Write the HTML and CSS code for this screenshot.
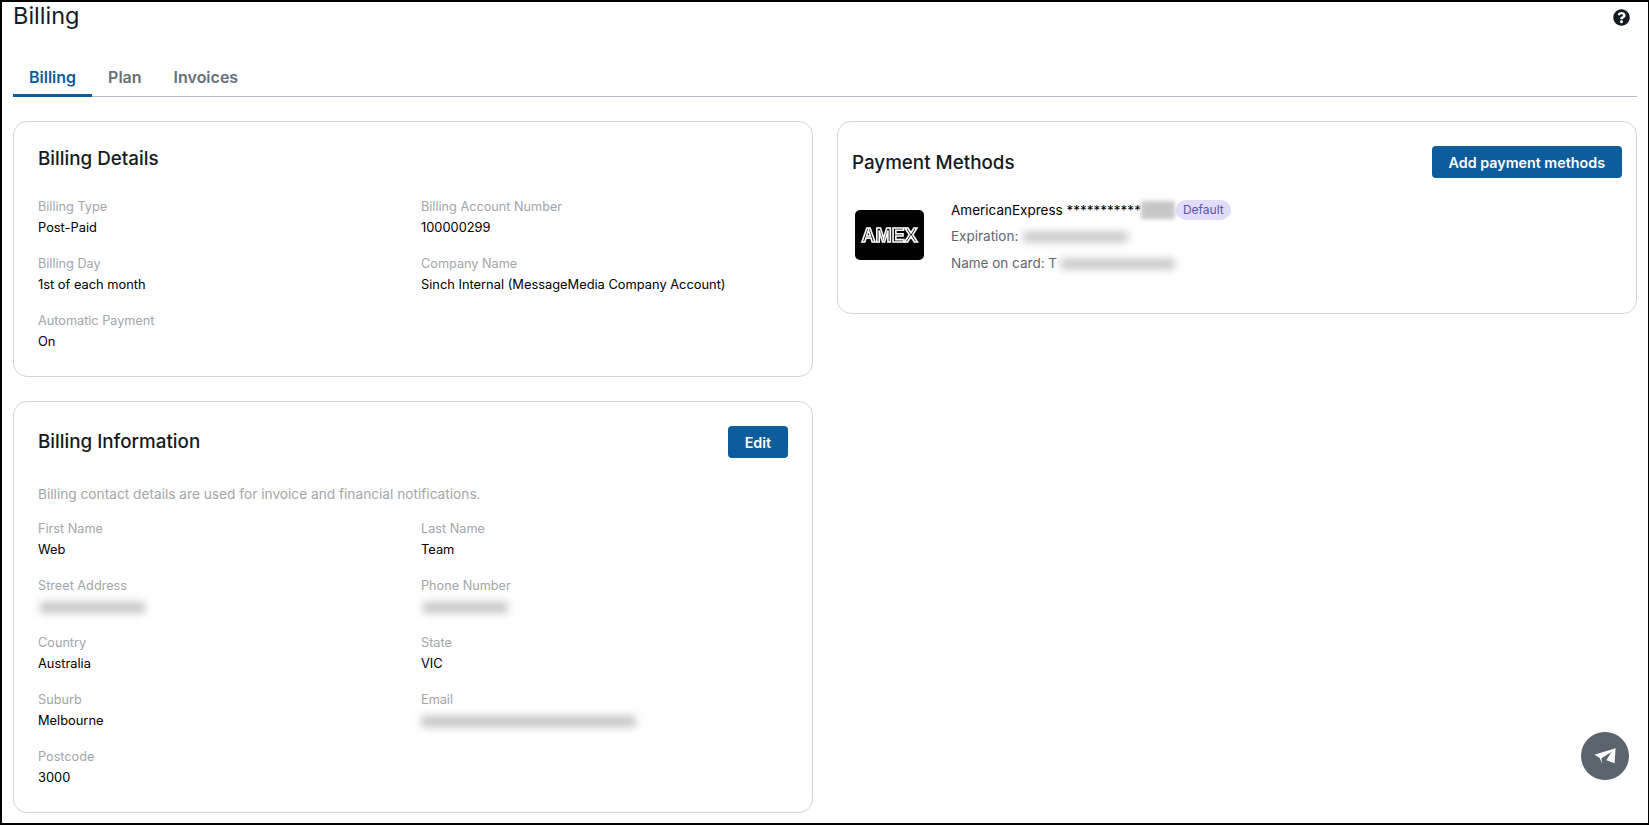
FILE: index.html
```html
<!DOCTYPE html>
<html lang="en">
<head>
  <meta charset="UTF-8" />
  <meta name="viewport" content="width=device-width, initial-scale=1.0"/>
  <title>Billing</title>
  <link rel="stylesheet" href="styles.css">
</head>
<body>
  <div class="page">
    <header class="page-header">
      <h1>Billing</h1>
      <svg class="help-icon" viewBox="0 0 512 512"><path d="M504 256c0 136.997-111.043 248-248 248S8 392.997 8 256C8 119.083 119.043 8 256 8s248 111.083 248 248zM262.655 90c-54.497 0-89.255 22.957-116.549 63.758-3.536 5.286-2.353 12.415 2.715 16.258l34.699 26.31c5.205 3.947 12.621 3.008 16.665-2.122 17.864-22.658 30.113-35.797 57.303-35.797 20.429 0 45.698 13.148 45.698 32.958 0 14.976-12.363 22.667-32.534 33.976C247.128 238.528 216 254.941 216 296v4c0 6.627 5.373 12 12 12h56c6.627 0 12-5.373 12-12v-1.333c0-28.462 83.186-29.647 83.186-106.667 0-58.002-60.165-102-116.531-102zM256 338c-25.365 0-46 20.635-46 46 0 25.364 20.635 46 46 46s46-20.636 46-46c0-25.365-20.635-46-46-46z"/></svg>
    </header>

    <nav class="tabs">
      <a class="tab active">Billing</a>
      <a class="tab">Plan</a>
      <a class="tab">Invoices</a>
    </nav>

    <div class="columns">
      <div class="column">
        <section class="card details-card">
          <h2>Billing Details</h2>
          <div class="field-grid">
            <div class="field"><div class="label">Billing Type</div><div class="value">Post-Paid</div></div>
            <div class="field"><div class="label">Billing Account Number</div><div class="value">100000299</div></div>
            <div class="field"><div class="label">Billing Day</div><div class="value">1st of each month</div></div>
            <div class="field"><div class="label">Company Name</div><div class="value">Sinch Internal (MessageMedia Company Account)</div></div>
            <div class="field"><div class="label">Automatic Payment</div><div class="value">On</div></div>
          </div>
        </section>

        <section class="card info-card">
          <div class="card-head">
            <h2>Billing Information</h2>
            <button class="btn btn-edit">Edit</button>
          </div>
          <p class="card-note">Billing contact details are used for invoice and financial notifications.</p>
          <div class="field-grid">
            <div class="field"><div class="label">First Name</div><div class="value">Web</div></div>
            <div class="field"><div class="label">Last Name</div><div class="value">Team</div></div>
            <div class="field"><div class="label">Street Address</div><div class="value"><span class="redacted street"></span></div></div>
            <div class="field"><div class="label">Phone Number</div><div class="value"><span class="redacted phone"></span></div></div>
            <div class="field"><div class="label">Country</div><div class="value">Australia</div></div>
            <div class="field"><div class="label">State</div><div class="value">VIC</div></div>
            <div class="field"><div class="label">Suburb</div><div class="value">Melbourne</div></div>
            <div class="field"><div class="label">Email</div><div class="value"><span class="redacted email"></span></div></div>
            <div class="field"><div class="label">Postcode</div><div class="value">3000</div></div>
          </div>
        </section>
      </div>

      <div class="column">
        <section class="card payment-card">
          <div class="card-head">
            <h2>Payment Methods</h2>
            <button class="btn">Add payment methods</button>
          </div>
          <div class="method">
            <svg class="amex" viewBox="0 0 69 50">
              <rect width="69" height="50" rx="5" fill="#000"/>
              <text x="34.5" y="32" text-anchor="middle" textLength="56" lengthAdjust="spacingAndGlyphs">AMEX</text>
            </svg>
            <div class="method-info">
              <div class="method-title">AmericanExpress ***********<span class="digits"></span><span class="badge">Default</span></div>
              <div class="method-line">Expiration:<span class="redacted expiry"></span></div>
              <div class="method-line">Name on card: T<span class="redacted holder"></span></div>
            </div>
          </div>
        </section>
      </div>
    </div>
  </div>

  <button class="fab">
    <svg viewBox="0 0 24 24"><path d="M0.500 10.500 23.500 3.500 22.500 20 13.500 16.500 19 7.500 8 14.500 9 20.500 6 14z"/></svg>
  </button>
</body>
</html>
```

FILE: styles.css
```css
:root {
  --primary: #0d5c9b;
  --text: #141a22;
  --muted: #a3a6a9;
  --border-color: #d3d5d8;
}

* {
  box-sizing: border-box;
}

html, body {
  height: 100%;
}

body {
  margin: 0;
  font-family: Inter, "Liberation Sans", sans-serif;
  color: var(--text);
  background: #fff;
  overflow: hidden;
}

.page {
  height: 100%;
  border: 2px solid #000;
  border-right-width: 1px;
  padding: 0 11px;
}

.page-header {
  display: flex;
  justify-content: space-between;
  align-items: flex-start;
  height: 58px;
}

h1 {
  margin: 0;
  font-size: 23.500px;
  font-weight: 400;
  line-height: 28px;
}

.help-icon {
  width: 17px;
  height: 17px;
  margin: 7px 7px 0 0;
  fill: #141a22;
}

.tabs {
  display: flex;
  border-bottom: 1px solid #b3bbc6;
  height: 37px;
}

.tab {
  padding: 7px 16px 0;
  height: 37px;
  font-size: 16px;
  font-weight: 600;
  color: #66707a;
}

.tab.active {
  color: var(--primary);
  border-bottom: 3px solid var(--primary);
}

.columns {
  display: grid;
  grid-template-columns: 800px 800px;
  gap: 24px;
  margin-top: 24px;
}

.column {
  display: flex;
  flex-direction: column;
  gap: 24px;
}

.card {
  border: 1px solid var(--border-color);
  border-radius: 14px;
  padding: 24px;
}

.details-card {
  height: 256px;
}

.info-card {
  height: 412px;
}

.payment-card {
  height: 193px;
  padding: 24px 14px;
}

h2 {
  margin: 0;
  font-size: 18.800px;
  font-weight: 500;
  line-height: 28px;
}

.details-card h2 {
  margin-top: -1px;
}

.payment-card h2 {
  margin-top: 2px;
}

.card-head {
  display: flex;
  justify-content: space-between;
  align-items: center;
  height: 32px;
}

.field-grid {
  display: grid;
  grid-template-columns: 1fr 1fr;
  column-gap: 16px;
  row-gap: 17px;
  margin-top: 25px;
}

.info-card .field-grid {
  margin-top: 16px;
}

.card-note {
  margin: 26px 0 0;
  font-size: 13.700px;
  line-height: 20px;
  color: var(--muted);
}

.label {
  font-size: 12.700px;
  line-height: 18px;
  color: var(--muted);
}

.value {
  font-size: 12.850px;
  line-height: 21px;
  padding-top: 1px;
  color: #000;
}

.redacted {
  display: inline-block;
  height: 11px;
  background: #c4c4c4;
  border-radius: 3px;
  filter: blur(4px);
  vertical-align: middle;
}

.street { width: 105px; margin-left: 2px; }
.phone { width: 85px; margin-left: 2px; }
.email { width: 215px; }
.expiry { width: 105px; margin-left: 5px; height: 10px; }
.holder { width: 115px; margin-left: 3px; height: 10px; }

.btn {
  height: 32px;
  padding: 0 17px;
  border: none;
  border-radius: 4px;
  background: var(--primary);
  color: #fff;
  font-family: inherit;
  font-size: 14.300px;
  font-weight: 600;
}

.method {
  display: flex;
  gap: 27px;
  margin: 18px 0 0 3px;
  align-items: flex-start;
}

.amex {
  width: 69px;
  height: 50px;
  margin-top: 14px;
  opacity: 0.99;
}

.amex text {
  font-family: "Liberation Sans", sans-serif;
  font-size: 21px;
  font-weight: 700;
  fill: #000;
  stroke: #fff;
  stroke-width: 1.700px;
}

.method-info {
  font-size: 13.500px;
}

.method-title {
  display: flex;
  align-items: center;
  height: 27px;
  color: #000;
}

.digits {
  width: 34px;
  height: 18px;
  background: #c6c6c6;
  filter: blur(2px);
}

.badge {
  margin-left: 1px;
  padding: 0 7px;
  height: 20px;
  line-height: 20px;
  border-radius: 10px;
  background: #e2dcfa;
  color: #5a53a8;
  font-size: 12px;
}

.method-line {
  height: 27px;
  line-height: 27px;
  color: #5f6670;
}

.fab {
  position: absolute;
  left: 1581px;
  top: 732px;
  width: 48px;
  height: 48px;
  padding: 13px;
  border: none;
  border-radius: 50%;
  background: #5a646e;
}

.fab svg {
  display: block;
  width: 22px;
  height: 22px;
  fill: #fff;
}
```
